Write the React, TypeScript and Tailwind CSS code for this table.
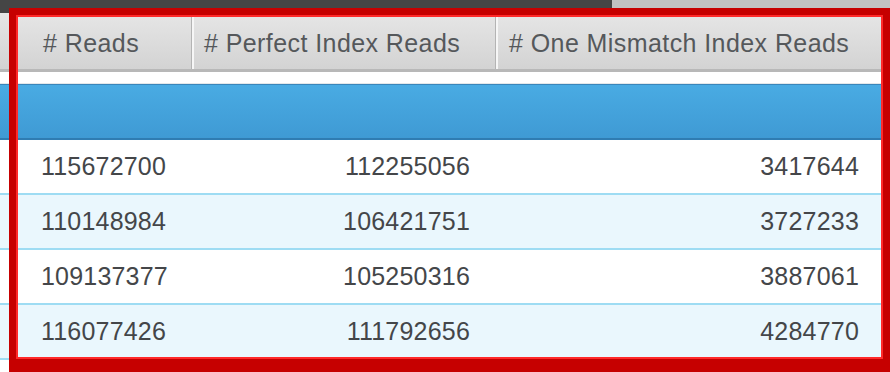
import React from "react";

const rows = [
  ["115672700", "112255056", "3417644"],
  ["110148984", "106421751", "3727233"],
  ["109137377", "105250316", "3887061"],
  ["116077426", "111792656", "4284770"],
];

export default function App() {
  return (
    <div
      className="relative w-[890px] h-[372px] overflow-hidden bg-white"
      style={{ fontFamily: '"Liberation Sans", Arial, sans-serif' }}
    >
      {/* top window strip */}
      <div className="flex h-[13px]">
        <div className="w-[612px] bg-[#454545]" />
        <div className="flex-1 bg-[#c2c2c2]" />
      </div>

      {/* header */}
      <div className="flex h-[59px] bg-gradient-to-b from-[#e6e6e6] to-[#d3d3d3] border-b-[3px] border-[#b8b8b8] text-[25px] text-[#55585b] tracking-[0.42px]">
        <div className="w-[192px] flex items-center pl-[43px] pt-[5px] border-r border-[#b4b4b4]">
          # Reads
        </div>
        <div className="w-[304px] flex items-center pl-[10px] pt-[5px] border-l-2 border-[#f6f6f6] border-r border-r-[#b4b4b4]">
          # Perfect Index Reads
        </div>
        <div className="flex-1 flex items-center pl-[11px] pt-[5px] border-l-2 border-[#f6f6f6]">
          # One Mismatch Index Reads
        </div>
      </div>

      {/* white gap */}
      <div className="h-[12px] bg-white border-b border-[#e4e8ea]" />

      {/* blue bar */}
      <div className="h-[56px] border-t border-[#3a86bb] bg-gradient-to-b from-[#49abe3] to-[#3f9ad4] border-b-2 border-b-[#2f7cb2]" />

      {/* rows */}
      <div className="text-[25px] text-[#444649] tracking-[0.2px]">
        {rows.map((r, i) => (
          <div
            key={i}
            className={`flex h-[55px] items-center border-b-2 border-[#9edcf3] ${
              i % 2 === 1 ? "bg-[#eaf7fd]" : "bg-white"
            }`}
          >
            <div className="w-[193px] pl-[41px]">{r[0]}</div>
            <div className="w-[277px] text-right">{r[1]}</div>
            <div className="flex-1 text-right pr-[31px]">{r[2]}</div>
          </div>
        ))}
      </div>

      {/* red annotation rectangle */}
      <div className="absolute left-[9px] top-[8px] right-0 bottom-0 border-[7px] border-b-[13px] border-[#c60000] shadow-[inset_0_0_0_2px_#ff2a2a]" />
    </div>
  );
}
